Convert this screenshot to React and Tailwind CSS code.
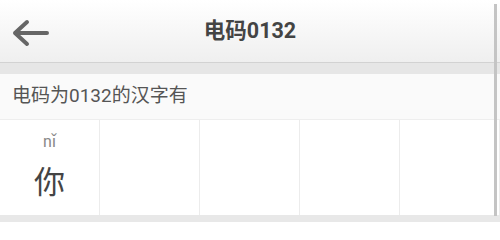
const chars = [{ py: "nǐ", ch: "你" }, null, null, null, null];

export default function App() {
  return (
    <div className="relative w-[500px] h-[222px] overflow-hidden bg-[#e8e8e8] font-['Roboto','Noto_Sans_CJK_SC',sans-serif]">
      <header className="h-[63px] flex items-center relative bg-gradient-to-b from-white to-[#efefef] border-b border-[#d2d2d2]">
        <svg className="absolute left-[12px] top-[19px]" width="37" height="28" viewBox="0 0 37 28" fill="none" stroke="#666" strokeWidth="4" strokeLinecap="round" strokeLinejoin="round">
          <path d="M3 14h32M15 3L3 14l12 11" />
        </svg>
        <h1 className="w-full text-center text-[21.5px] font-bold text-[#444]">电码0132</h1>
      </header>
      <div className="h-[11px] bg-[#e6e6e6]" />
      <div className="h-[46px] bg-[#fafafa] border-b border-[#eeeeee] flex items-center pl-[12px] text-[19px] text-[#555]">
        电码为0132的汉字有
      </div>
      <div className="grid grid-cols-5 h-[95px] bg-white">
        {chars.map((c, i) => (
          <div key={i} className="border-r border-[#ececec] flex flex-col items-center">
            {c && (
              <>
                <span className="mt-[12px] text-[16px] leading-[20px] text-[#888]">{c.py}</span>
                <span className="mt-[13px] text-[31px] leading-[36px] text-[#444]">{c.ch}</span>
              </>
            )}
          </div>
        ))}
      </div>
      <div className="absolute right-[3px] top-[4px] h-[212px] w-[3px] bg-[#c4c4c4]" />
    </div>
  );
}
